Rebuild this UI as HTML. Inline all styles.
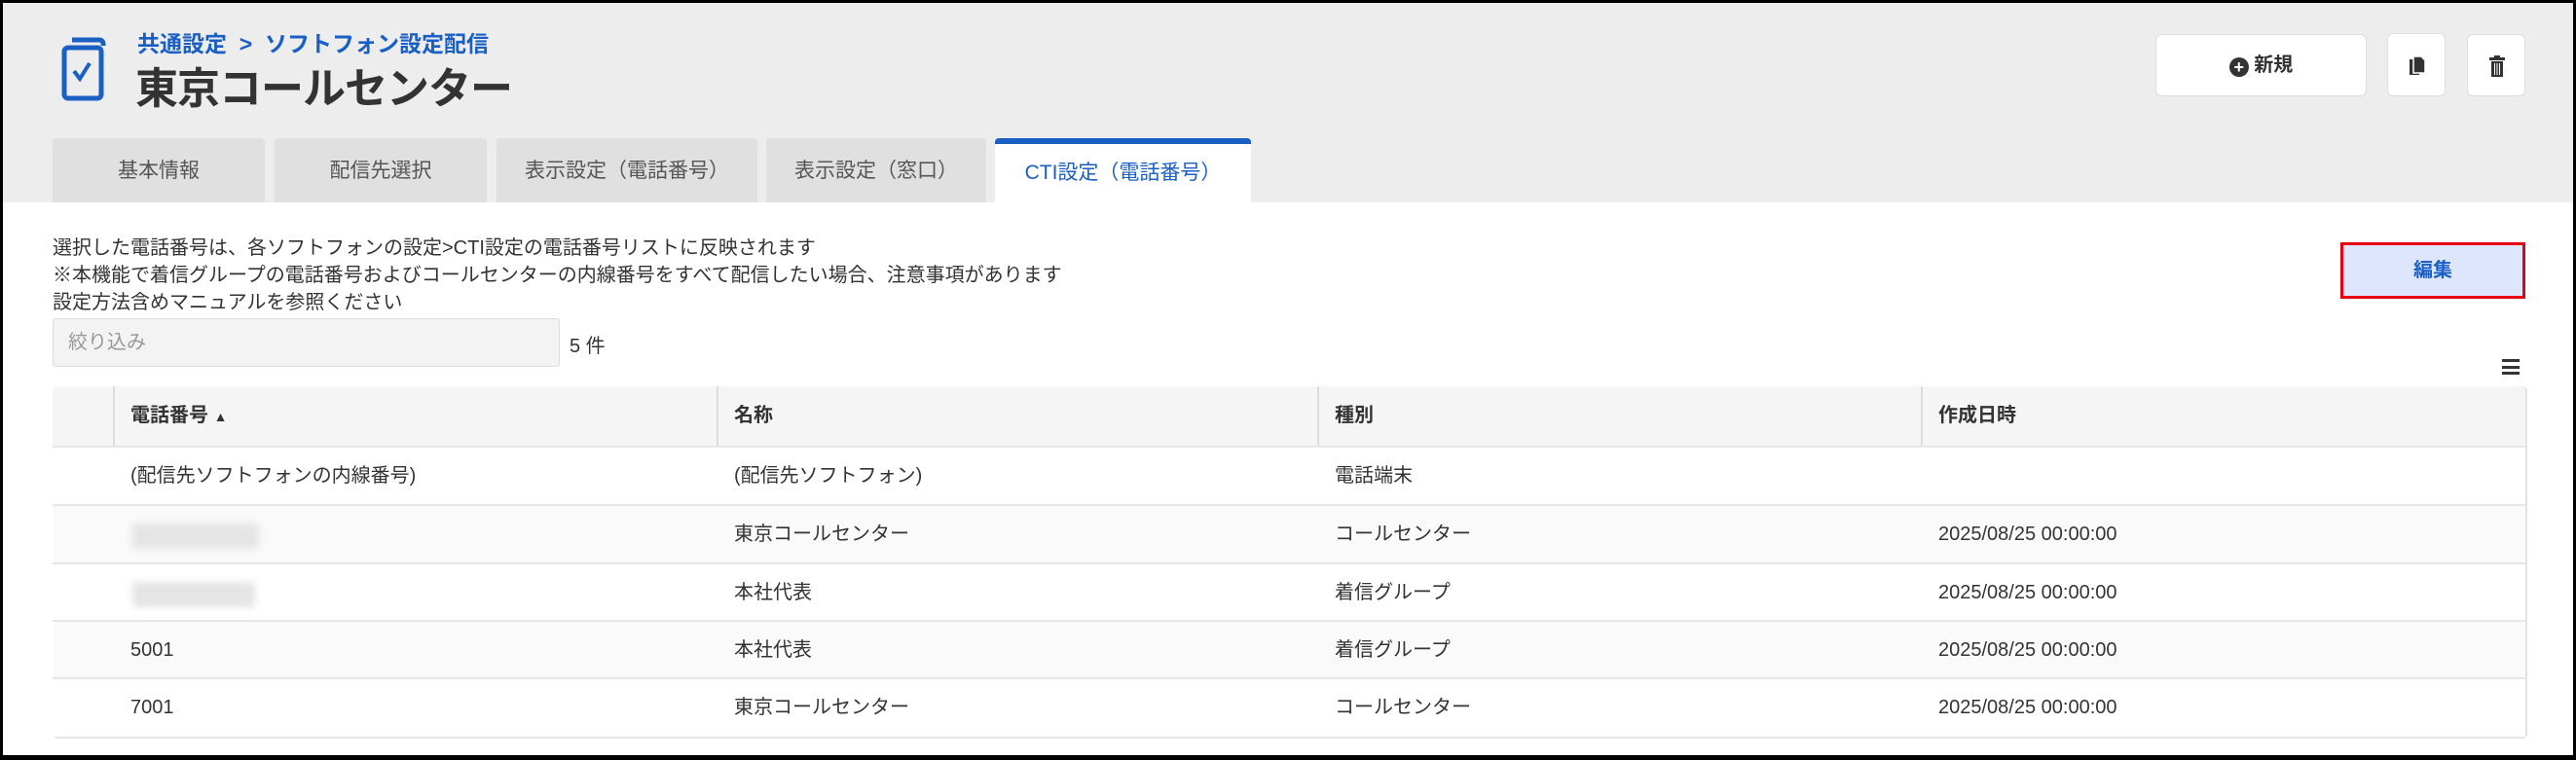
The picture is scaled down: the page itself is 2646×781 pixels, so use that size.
<!DOCTYPE html>
<html><head><meta charset="utf-8"><style>
*{margin:0;padding:0;box-sizing:border-box}
html,body{width:2646px;height:781px;overflow:hidden;background:#000}
body{font-family:"Liberation Sans","Noto Sans CJK JP",sans-serif;color:#333}
#f{position:absolute;left:3px;top:3px;width:2640px;height:773px;background:#fff;overflow:hidden}
.hd{position:absolute;left:0;top:0;width:100%;height:205px;background:#ededed}
.a{position:absolute;white-space:nowrap}
.tab{position:absolute;top:139px;height:66px;background:#e0e0e0;border-radius:4px 4px 0 0;font-size:21px;color:#555;text-align:center;line-height:68px}
.btn{position:absolute;background:#fff;border:1px solid #ddd;border-radius:6px}
.t{font-size:20px;color:#333}
.row{position:absolute;left:51px;width:2540px;height:60px;border-top:2px solid #e6e6e6}
.c{position:absolute;top:0;line-height:58px;font-size:20px;color:#333}
.blur{position:absolute;top:18px;height:26px;background:#e4e4e4;filter:blur(4px);border-radius:4px}
</style></head><body><div id="f">
<div class="hd"></div>
<svg class="a" style="left:59px;top:34px" width="52" height="68" viewBox="0 0 52 68"><path d="M12 4h28a4 4 0 0 1 4 4v2" fill="none" stroke="#1a5fc4" stroke-width="5"/><rect x="4" y="12" width="38" height="52" rx="4" fill="none" stroke="#1a5fc4" stroke-width="5"/><path d="M14 36l6 8 10-16" fill="none" stroke="#1a5fc4" stroke-width="4"/></svg>
<div class="a" style="left:138px;top:23px;font-size:23px;font-weight:bold;color:#1a5fc4">共通設定 &nbsp;&gt;&nbsp; ソフトフォン設定配信</div>
<div class="a" style="left:136px;top:52px;font-size:44px;font-weight:bold;color:#333;letter-spacing:-1px">東京コールセンター</div>
<div class="tab" style="left:51px;width:218px">基本情報</div>
<div class="tab" style="left:279px;width:218px">配信先選択</div>
<div class="tab" style="left:507px;width:268px">表示設定（電話番号）</div>
<div class="tab" style="left:784px;width:226px">表示設定（窓口）</div>
<div class="tab" style="left:1019px;width:263px;background:#fff;border-top:6px solid #1a5fc4;color:#1a5fc4;line-height:60px">CTI設定（電話番号）</div>
<div class="btn" style="left:2211px;top:32px;width:217px;height:64px;text-align:center;line-height:62px;font-size:20px;font-weight:bold"><span style="display:inline-block;width:20px;height:20px;border-radius:50%;background:#333;color:#fff;line-height:20px;font-size:18px;vertical-align:-2px">+</span> 新規</div>
<div class="btn" style="left:2449px;top:31px;width:60px;height:65px"><svg style="position:absolute;left:20px;top:22px" width="20" height="22" viewBox="0 0 20 22"><path d="M2 4h10v16H2z" fill="#333"/><path d="M6 1h8l4 4v13H6z" fill="#333" stroke="#fff" stroke-width="1.5"/></svg></div>
<div class="btn" style="left:2531px;top:32px;width:60px;height:64px"><svg style="position:absolute;left:22px;top:21px" width="16" height="22" viewBox="0 0 16 22"><rect x="0" y="2" width="16" height="3" fill="#333"/><rect x="5" y="0" width="6" height="3" fill="#333"/><path d="M2 6h12v16H2z" fill="#333"/><path d="M5.5 8v12M8 8v12M10.5 8v12" stroke="#fff" stroke-width="1"/></svg></div>
<div class="a" style="left:2401px;top:246px;width:190px;height:58px;background:#dde6fd;border:3px solid #e60012;text-align:center;line-height:52px;font-size:20px;font-weight:bold;color:#1a5fc4">編集</div>
<div class="a t" style="left:51px;top:235px">選択した電話番号は、各ソフトフォンの設定&gt;CTI設定の電話番号リストに反映されます</div>
<div class="a t" style="left:51px;top:263px">※本機能で着信グループの電話番号およびコールセンターの内線番号をすべて配信したい場合、注意事項があります</div>
<div class="a t" style="left:51px;top:291px">設定方法含めマニュアルを参照ください</div>
<div class="a" style="left:51px;top:324px;width:521px;height:50px;background:#f3f3f3;border:1px solid #ddd;border-radius:3px;font-size:20px;color:#999;line-height:48px;padding-left:15px">絞り込み</div>
<div class="a t" style="left:582px;top:336px">5 件</div>
<div class="a" style="left:2567px;top:366px;width:18px;height:16px;border-top:3px solid #333;border-bottom:3px solid #333"><div style="margin-top:3.5px;height:3px;background:#333"></div></div>
<div class="a" style="left:51px;top:394px;width:2542px;height:362px;border:2px solid #e3e3e3;border-radius:5px"></div>
<div class="row" style="top:394px;height:61px;background:#f5f5f5;border-top:none;border-radius:5px 5px 0 0">
<div class="a" style="left:62px;top:0;height:61px;border-left:2px solid #ddd"></div>
<div class="a" style="left:682px;top:0;height:61px;border-left:2px solid #ddd"></div>
<div class="a" style="left:1299px;top:0;height:61px;border-left:2px solid #ddd"></div>
<div class="a" style="left:1919px;top:0;height:61px;border-left:2px solid #ddd"></div>
<div class="c" style="left:80px;line-height:60px;font-weight:bold">電話番号 <span style="font-size:14px">▲</span></div>
<div class="c" style="left:700px;line-height:60px;font-weight:bold">名称</div>
<div class="c" style="left:1317px;line-height:60px;font-weight:bold">種別</div>
<div class="c" style="left:1937px;line-height:60px;font-weight:bold">作成日時</div>
</div>
<div class="row" style="top:455px;background:#fff"><div class="c" style="left:80px">(配信先ソフトフォンの内線番号)</div><div class="c" style="left:700px">(配信先ソフトフォン)</div><div class="c" style="left:1317px">電話端末</div></div>
<div class="row" style="top:515px;background:#fafafa"><div class="blur" style="left:82px;width:130px"></div><div class="c" style="left:700px">東京コールセンター</div><div class="c" style="left:1317px">コールセンター</div><div class="c" style="left:1937px">2025/08/25 00:00:00</div></div>
<div class="row" style="top:575px;background:#fff"><div class="blur" style="left:82px;width:126px"></div><div class="c" style="left:700px">本社代表</div><div class="c" style="left:1317px">着信グループ</div><div class="c" style="left:1937px">2025/08/25 00:00:00</div></div>
<div class="row" style="top:634px;background:#fafafa"><div class="c" style="left:80px">5001</div><div class="c" style="left:700px">本社代表</div><div class="c" style="left:1317px">着信グループ</div><div class="c" style="left:1937px">2025/08/25 00:00:00</div></div>
<div class="row" style="top:693px;height:61px;background:#fff"><div class="c" style="left:80px">7001</div><div class="c" style="left:700px">東京コールセンター</div><div class="c" style="left:1317px">コールセンター</div><div class="c" style="left:1937px">2025/08/25 00:00:00</div></div>
</div></body></html>
